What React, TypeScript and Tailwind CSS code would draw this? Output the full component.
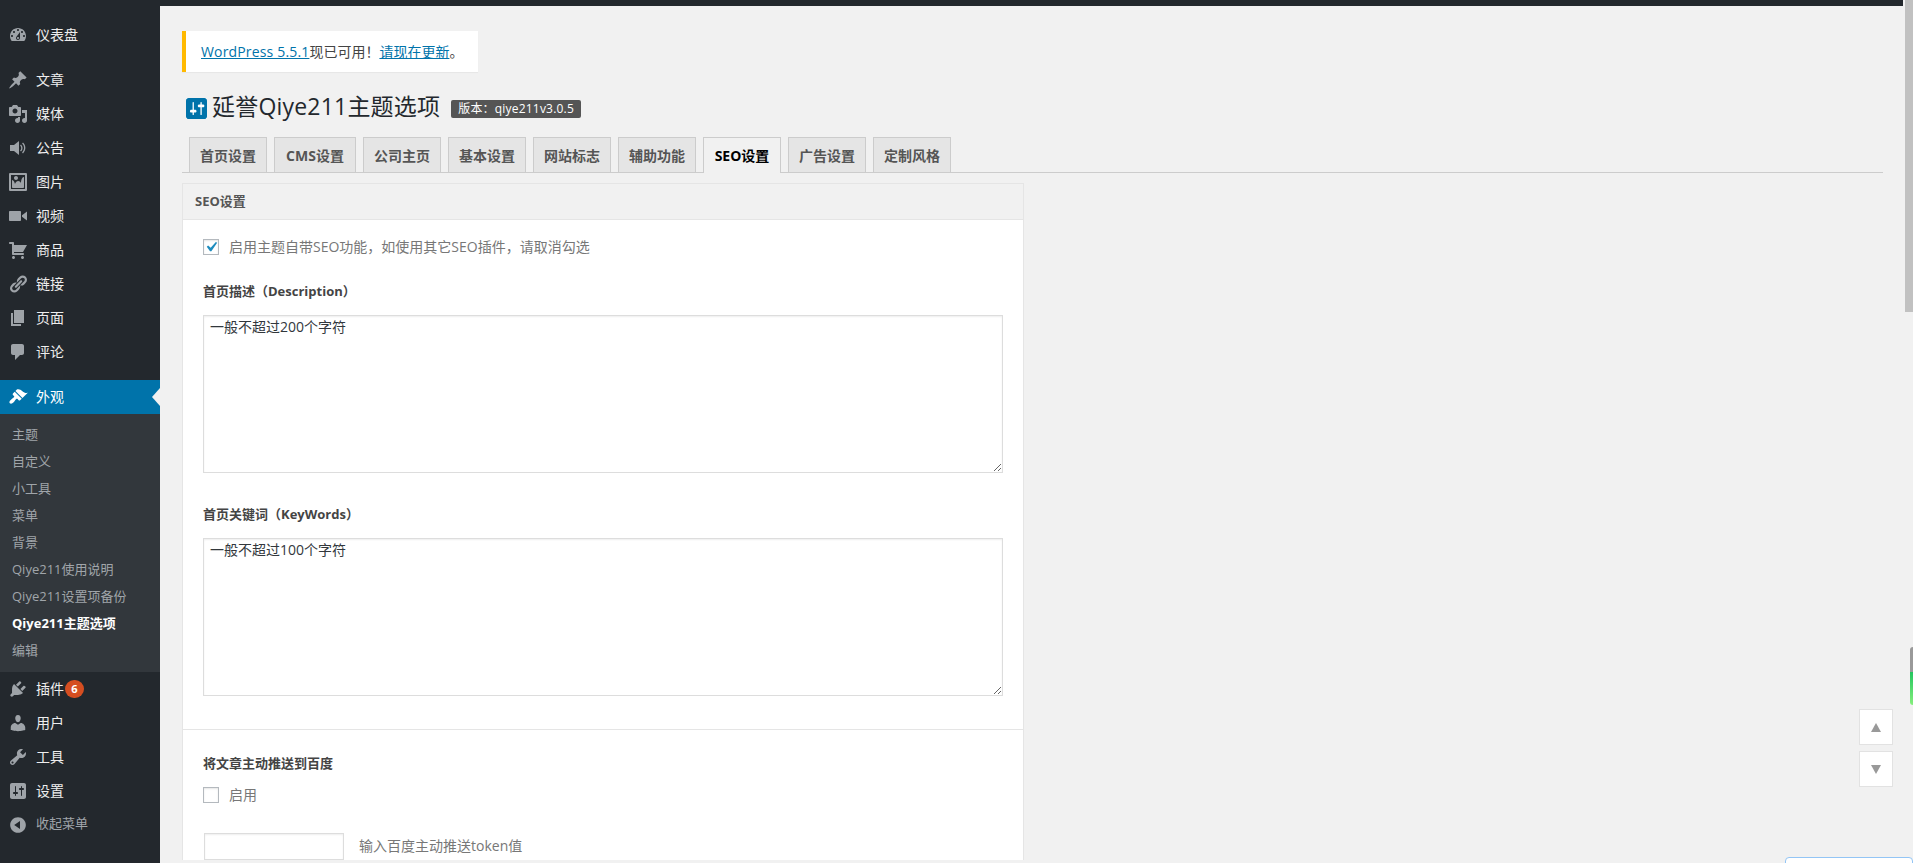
const ICONS: Record<string, string> = {
  dashboard:
    "M3.76 16h12.48c1.1-1.37 1.76-3.11 1.76-5 0-4.42-3.58-8-8-8s-8 3.58-8 8c0 1.89.66 3.63 1.76 5zM10 4c.55 0 1 .45 1 1s-.45 1-1 1-1-.45-1-1 .45-1 1-1zM6 6c.55 0 1 .45 1 1s-.45 1-1 1-1-.45-1-1 .45-1 1-1zm8 0c.55 0 1 .45 1 1s-.45 1-1 1-1-.45-1-1 .45-1 1-1zm-5.37 5.55L12 7v6c0 1.1-.9 2-2 2s-2-.9-2-2c0-.57.24-1.08.63-1.45zM4 10c.55 0 1 .45 1 1s-.45 1-1 1-1-.45-1-1 .45-1 1-1zm12 0c.55 0 1 .45 1 1s-.45 1-1 1-1-.45-1-1 .45-1 1-1zm-5 3c0-.55-.45-1-1-1s-1 .45-1 1 .45 1 1 1 1-.45 1-1z",
  post: "M10.44 3.02l1.82-1.82 6.36 6.35-1.83 1.82c-1.05-.68-2.48-.57-3.41.36l-.75.75c-.92.93-1.04 2.35-.35 3.41l-1.83 1.82-2.41-2.41-2.8 2.79c-.42.42-3.38 2.71-3.8 2.29s1.86-3.39 2.28-3.81l2.79-2.79L4.1 9.36l1.83-1.82c1.05.69 2.48.57 3.4-.36l.75-.75c.93-.92 1.05-2.35.36-3.41z",
  media:
    "M13 11V4c0-.55-.45-1-1-1h-1.67L9 1H5L3.67 3H2c-.55 0-1 .45-1 1v7c0 .55.45 1 1 1h10c.55 0 1-.45 1-1zM7 4.5c1.38 0 2.5 1.12 2.5 2.5S8.38 9.5 7 9.5 4.5 8.38 4.5 7 5.62 4.5 7 4.5zM14 6h5v10.5c0 1.38-1.12 2.5-2.5 2.5S14 17.88 14 16.5s1.12-2.5 2.5-2.5c.17 0 .34.02.5.05V9h-3V6zm-4 8.05V13h2v3.5c0 1.38-1.12 2.5-2.5 2.5S7 17.88 7 16.5 8.12 14 9.5 14c.17 0 .34.02.5.05z",
  volume:
    "M2 7h4l5-4v14l-5-4H2V7zm11-.6c2.1 1.9 2.1 5.3 0 7.2l-.9-1c1.5-1.4 1.5-3.8 0-5.2l.9-1zm2-1.8c3.2 2.9 3.2 7.9 0 10.8l-.9-1c2.6-2.4 2.6-6.4 0-8.8l.9-1z",
  image:
    "M2.25 1h15.5c.69 0 1.25.56 1.25 1.25v15.5c0 .69-.56 1.25-1.25 1.25H2.25C1.56 19 1 18.44 1 17.75V2.25C1 1.56 1.56 1 2.25 1zM17 17V3H3v14h14zM10 6c0-1.1-.9-2-2-2s-2 .9-2 2 .9 2 2 2 2-.9 2-2zm3 5s0-6 3-6v10c0 .55-.45 1-1 1H5c-.55 0-1-.45-1-1V8c2 0 3 4 3 4s1-3 3-3 3 2 3 2z",
  video: "M2 5h10c.55 0 1 .45 1 1v8c0 .55-.45 1-1 1H2c-.55 0-1-.45-1-1V6c0-.55.45-1 1-1zm17 .5v9L14 10.8V9.2l5-3.7z",
  cart: "M6 13h9c.55 0 1 .45 1 1s-.45 1-1 1H5c-.55 0-1-.45-1-1V4H2c-.55 0-1-.45-1-1s.45-1 1-1h3c.55 0 1 .45 1 1v2h13l-4 7H6v1zm-.5 3c.83 0 1.5.67 1.5 1.5S6.33 19 5.5 19 4 18.33 4 17.5 4.67 16 5.5 16zm9 0c.83 0 1.5.67 1.5 1.5s-.67 1.5-1.5 1.5-1.5-.67-1.5-1.5.67-1.5 1.5-1.5z",
  links:
    "M17.74 2.76c1.68 1.69 1.68 4.41 0 6.1l-1.53 1.52c-1.12 1.12-2.7 1.47-4.14 1.09l2.62-2.61.76-.77.76-.76c.84-.84.84-2.2 0-3.04-.84-.85-2.2-.85-3.04 0l-.77.76-3.38 3.38c-.37-1.44-.02-3.02 1.1-4.14l1.52-1.53c1.69-1.68 4.42-1.68 6.1 0zM8.59 13.43l5.34-5.34c.42-.42.42-1.1 0-1.52-.44-.43-1.13-.39-1.53 0l-5.33 5.34c-.42.42-.42 1.1 0 1.52.44.43 1.13.39 1.52 0zm-.76 2.29l4.14-4.15c.38 1.44.03 3.02-1.09 4.14l-1.52 1.53c-1.69 1.68-4.41 1.68-6.1 0-1.68-1.68-1.68-4.42 0-6.1l1.53-1.52c1.12-1.12 2.7-1.47 4.14-1.1l-4.14 4.15c-.85.84-.85 2.2 0 3.05.84.84 2.2.84 3.04 0z",
  page: "M6 15V2h10v13H6zm-1 1h8v2H3V5h2v11z",
  comments: "M5 2h9c1.1 0 2 .9 2 2v7c0 1.1-.9 2-2 2h-2l-5 5v-5H5c-1.1 0-2-.9-2-2V4c0-1.1.9-2 2-2z",
  appearance:
    "M14.48 11.06L7.41 3.99l1.5-1.5c.5-.56 2.3-.47 3.51.32 1.21.8 1.43 1.28 2.91 2.1 1.18.64 2.45 1.26 4.45.85zm-.71.71L6.7 4.7 4.93 6.47c-.39.39-.39 1.02 0 1.41l1.06 1.06c.39.39.39 1.03 0 1.42-.6.6-1.43 1.11-2.21 1.69-.35.26-.7.53-1.01.84C1.43 13.71.96 15.33 1.85 16.21c.89.89 2.5.42 3.8-.88.31-.31.58-.66.84-1.01.58-.78 1.09-1.61 1.69-2.21.39-.39 1.02-.39 1.41 0l1.06 1.06c.39.39 1.02.39 1.41 0z",
  plugins:
    "M13.11 4.36L9.87 7.6 8 5.73l3.24-3.24c.35-.34 1.05-.2 1.56.32.52.51.66 1.21.31 1.55zm-8 1.77l.91-1.12 9.01 9.01-1.19.84c-.71.71-2.63 1.16-3.82 1.16H6.14L4.9 17.26c-.59.59-1.54.59-2.12 0-.59-.58-.59-1.53 0-2.12l1.24-1.24v-3.88c0-1.13.4-3.19 1.09-3.89zm7.26 3.97l3.24-3.24c.34-.35 1.04-.21 1.55.31.52.51.66 1.21.31 1.55l-3.24 3.25z",
  users:
    "M10 9.25c-2.27 0-2.73-3.44-2.73-3.44C7 4.02 7.82 2 9.97 2c2.16 0 2.98 2.02 2.71 3.81 0 0-.41 3.44-2.68 3.44zm0 2.57L12.72 10c2.39 0 4.52 2.33 4.52 4.53v2.49s-3.65 1.13-7.24 1.13c-3.65 0-7.24-1.13-7.24-1.13v-2.49c0-2.25 1.94-4.48 4.47-4.48z",
  tools:
    "M16.68 9.77c-1.34 1.34-3.3 1.67-4.95.99l-5.41 6.52c-.99.99-2.59.99-3.58 0s-.99-2.59 0-3.57l6.52-5.42c-.68-1.65-.35-3.61.99-4.95 1.28-1.28 3.12-1.62 4.72-1.06l-2.89 2.89 2.82 2.82 2.86-2.87c.53 1.58.18 3.39-1.08 4.65zM3.81 16.21c.4.39 1.04.39 1.43 0 .4-.4.4-1.04 0-1.43-.39-.4-1.03-.4-1.43 0-.39.39-.39 1.03 0 1.43z",
  settings:
    "M18 16V4c0-1.1-.9-2-2-2H4c-1.1 0-2 .9-2 2v12c0 1.1.9 2 2 2h12c1.1 0 2-.9 2-2zM8 11h1c.55 0 1 .45 1 1s-.45 1-1 1H8v1.5c0 .28-.22.5-.5.5s-.5-.22-.5-.5V13H6c-.55 0-1-.45-1-1s.45-1 1-1h1V5.5c0-.28.22-.5.5-.5s.5.22.5.5V11zm5-2h-1c-.55 0-1-.45-1-1s.45-1 1-1h1V5.5c0-.28.22-.5.5-.5s.5.22.5.5V7h1c.55 0 1 .45 1 1s-.45 1-1 1h-1v5.5c0 .28-.22.5-.5.5s-.5-.22-.5-.5V9z",
  collapse:
    "M10 2.16c4.33 0 7.84 3.51 7.84 7.84s-3.51 7.84-7.84 7.84S2.16 14.33 2.16 10 5.71 2.16 10 2.16zm2 11.72V6.12L6.18 9.97z",
};

const GROUP_1 = [
  { icon: "post", label: "文章" },
  { icon: "media", label: "媒体" },
  { icon: "volume", label: "公告" },
  { icon: "image", label: "图片" },
  { icon: "video", label: "视频" },
  { icon: "cart", label: "商品" },
  { icon: "links", label: "链接" },
  { icon: "page", label: "页面" },
  { icon: "comments", label: "评论" },
];

const SUBMENU = ["主题", "自定义", "小工具", "菜单", "背景", "Qiye211使用说明", "Qiye211设置项备份", "Qiye211主题选项", "编辑"];

const TABS = ["首页设置", "CMS设置", "公司主页", "基本设置", "网站标志", "辅助功能", "SEO设置", "广告设置", "定制风格"];

function Dashicon({ name, className }: { name: string; className: string }) {
  return (
    <svg viewBox="0 0 20 20" className={className} fill="currentColor">
      <path d={ICONS[name]} />
    </svg>
  );
}

function MenuRow({ icon, label, badge }: { icon: string; label: string; badge?: string }) {
  return (
    <div className="flex h-[34px] items-center text-[14px] text-[#eeeeee]">
      <Dashicon name={icon} className="ml-2 mr-2 h-5 w-5 text-[#9ea3a8]" />
      <span className="pb-0.5">{label}</span>
      {badge && (
        <span className="ml-px flex h-[18px] w-[19px] items-center justify-center rounded-full bg-[#d54e21] text-[11px] font-bold text-white">
          {badge}
        </span>
      )}
    </div>
  );
}

function Sidebar() {
  return (
    <aside className="w-[160px] shrink-0 bg-[#23282d] pt-3">
      <MenuRow icon="dashboard" label="仪表盘" />
      <div className="mt-[11px]">
        {GROUP_1.map((item) => (
          <MenuRow key={item.label} icon={item.icon} label={item.label} />
        ))}
      </div>
      <div className="relative mt-[11px] flex h-[34px] items-center bg-[#0073aa] text-[14px] text-white">
        <Dashicon name="appearance" className="ml-2 mr-2 h-5 w-5" />
        <span className="pb-0.5">外观</span>
        <span className="absolute right-0 top-[8px] h-0 w-0 border-y-[9px] border-r-[8px] border-y-transparent border-r-[#f1f1f1]" />
      </div>
      <div className="bg-[#32373c] py-[7px] pb-[8px]">
        {SUBMENU.map((s) => (
          <div
            key={s}
            className={`flex h-[27px] items-center pl-3 text-[13px] ${
              s === "Qiye211主题选项" ? "font-bold text-white" : "text-[#a0a5aa]"
            }`}
          >
            {s}
          </div>
        ))}
      </div>
      <MenuRow icon="plugins" label="插件" badge="6" />
      <MenuRow icon="users" label="用户" />
      <MenuRow icon="tools" label="工具" />
      <MenuRow icon="settings" label="设置" />
      <div className="flex h-[34px] items-center text-[13px] text-[#a0a5aa]">
        <Dashicon name="collapse" className="ml-2 mr-2 h-5 w-5 text-[#9ea3a8]" />
        <span className="pb-0.5">收起菜单</span>
      </div>
    </aside>
  );
}

function Checkbox({ checked }: { checked?: boolean }) {
  return (
    <span className="flex h-4 w-4 shrink-0 items-center justify-center overflow-visible border border-[#b4b9be] bg-white shadow-[inset_0_1px_2px_rgba(0,0,0,0.1)]">
      {checked && (
        <svg viewBox="0 0 20 20" className="h-[20px] w-[20px] shrink-0 text-[#1e8cbe]" fill="currentColor">
          <path d="M14.83 4.89l1.34.94-5.81 8.38H9.02L5.78 9.67l1.34-1.25 2.57 2.4z" />
        </svg>
      )}
    </span>
  );
}

function AreaField({ label, hint }: { label: string; hint: string }) {
  return (
    <div>
      <div className="h-5 text-[13px] font-bold leading-[18px] text-[#444444]">{label}</div>
      <textarea
        readOnly
        defaultValue={hint}
        className="mt-[13px] block h-[158px] w-[800px] resize-y border border-[#dddddd] bg-white px-[6px] py-px text-[14px] leading-[20px] text-[#32373c] shadow-[inset_0_1px_2px_rgba(0,0,0,0.07)] outline-none"
      />
    </div>
  );
}

function Panel() {
  return (
    <section className="ml-[22px] mt-[10px] w-[842px] border border-b-0 border-[#e5e5e5] bg-white">
      <h2 className="flex h-[36px] items-center border-b border-[#e5e5e5] bg-[#f1f1f1] pl-3 text-[13px] font-bold text-[#555555]">
        SEO设置
      </h2>
      <div className="px-5 pb-[33px]">
        <label className="mt-[19px] flex h-4 items-center gap-2.5 text-[14px] text-[#777777]">
          <Checkbox checked />
          <span className="pb-0.5">启用主题自带SEO功能，如使用其它SEO插件，请取消勾选</span>
        </label>
        <div className="mt-[27px]">
          <AreaField label="首页描述（Description）" hint="一般不超过200个字符" />
        </div>
        <div className="mt-[32px]">
          <AreaField label="首页关键词（KeyWords）" hint="一般不超过100个字符" />
        </div>
      </div>
      <div className="border-t border-[#e5e5e5] px-5">
        <div className="mt-[24px] h-5 text-[13px] font-bold leading-[18px] text-[#444444]">将文章主动推送到百度</div>
        <label className="mt-[13px] flex h-4 items-center gap-2.5 text-[14px] text-[#777777]">
          <Checkbox />
          <span className="pb-0.5">启用</span>
        </label>
        <div className="ml-px mt-[30px] flex items-center text-[14px] text-[#777777]">
          <span className="h-[27px] w-[140px] border border-[#dddddd] bg-white shadow-[inset_0_1px_2px_rgba(0,0,0,0.07)]" />
          <span className="ml-[15px] pb-0.5">输入百度主动推送token值</span>
        </div>
      </div>
    </section>
  );
}

export default function App() {
  return (
    <div
      className="relative flex h-[863px] w-[1913px] overflow-hidden bg-[#f1f1f1]"
      style={{ fontFamily: '"Open Sans", "Noto Sans CJK SC", sans-serif' }}
    >
      <div className="flex w-[1903px] flex-col">
        <div className="h-[6px] shrink-0 bg-[#23282d]" />
        <div className="flex min-h-0 flex-1">
          <Sidebar />
          <main className="min-w-0 flex-1">
            <div className="ml-[22px] mt-[25px] flex h-[41px] w-[296px] items-center border-l-4 border-[#ffb900] bg-white pl-[15px] text-[14px] text-[#444444] shadow-[0_1px_1px_rgba(0,0,0,0.04)]">
              <a className="tracking-[0.16px] text-[#0073aa] underline">WordPress 5.5.1</a>
              现已可用！
              <a className="text-[#0073aa] underline">请现在更新</a>。
            </div>
            <div className="ml-[22px] mt-[23px] flex h-[24px] items-center pl-1 text-[#23282d]">
              <svg viewBox="2 2 16 16" className="mt-0.5 h-[21px] w-[21px] bg-white text-[#0073aa]" fill="currentColor">
                <path d={ICONS.settings} />
              </svg>
              <h1 className="ml-[5px] pb-0.5 text-[23px] font-normal leading-none tracking-[0.2px]">延誉Qiye211主题选项</h1>
              <span className="ml-[11px] mt-1 flex h-[18px] items-center rounded-[2px] bg-[#555555] px-[7px] text-[12px] tracking-[0.2px] text-white">
                版本：qiye211v3.0.5
              </span>
            </div>
            <div className="ml-[22px] mt-[18px] flex h-[36px] w-[1701px] items-start gap-[7px] border-b border-[#cccccc] pl-[7px]">
              {TABS.map((t) => (
                <div
                  key={t}
                  className={`flex items-center justify-center border border-b-0 border-[#cccccc] text-[14px] font-bold ${
                    t === "CMS设置" ? "w-[82px]" : "w-[78px]"
                  } ${t === "SEO设置" ? "h-[36px] bg-[#f1f1f1] pb-px text-black" : "h-[35px] bg-[#e5e5e5] text-[#555555]"}`}
                >
                  {t}
                </div>
              ))}
            </div>
            <Panel />
          </main>
        </div>
      </div>
      <div className="flex w-[10px] justify-end">
        <div className="h-[312px] w-[8px] bg-[#c1c1c1]" />
      </div>

      {/* floating bits over the page */}
      <div className="absolute left-[1859px] top-[709px] flex h-[36px] w-[34px] items-center justify-center border border-[#e2e2e2] bg-white text-[#999999]">
        <span className="h-0 w-0 border-x-[5px] border-b-[9px] border-x-transparent border-b-current" />
      </div>
      <div className="absolute left-[1859px] top-[751px] flex h-[36px] w-[34px] items-center justify-center border border-[#e2e2e2] bg-white text-[#999999]">
        <span className="h-0 w-0 border-x-[5px] border-t-[9px] border-x-transparent border-t-current" />
      </div>
      <div className="absolute left-[1910px] top-[647px] h-[58px] w-[3px] rounded-l-sm bg-[linear-gradient(#999999_0,#999999_43%,#22c55e_43%,#86ef7d_100%)]" />
      <div className="absolute left-[1785px] top-[857px] h-[10px] w-[128px] rounded-t-sm border border-[#93c5f5] bg-white" />
    </div>
  );
}
